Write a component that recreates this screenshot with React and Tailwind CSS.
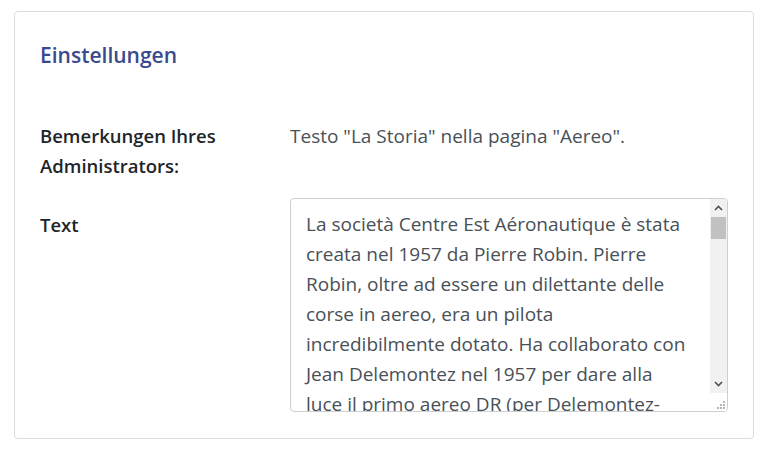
import React from "react";

const FONT = { fontFamily: '"Open Sans", "Noto Sans", sans-serif' };

const TEXT =
  "La società Centre Est Aéronautique è stata creata nel 1957 da Pierre Robin. Pierre Robin, oltre ad essere un dilettante delle corse in aereo, era un pilota incredibilmente dotato. Ha collaborato con Jean Delemontez nel 1957 per dare alla luce il primo aereo DR (per Delemontez-Robin), il DR100, un monomotore in legno.";

function Scrollbar() {
  return (
    <div className="flex w-[17px] shrink-0 flex-col">
      <div className="flex h-[18px] items-center justify-center bg-[#f1f1f1]">
        <svg width="9" height="6" viewBox="0 0 9 6">
          <path d="M1 5 L4.5 1.5 L8 5" fill="none" stroke="#505050" strokeWidth="1.6" />
        </svg>
      </div>
      <div className="flex flex-1 flex-col bg-[#f1f1f1]">
        <div className="mx-[1px] h-[22px] bg-[#c1c1c1]" />
      </div>
      <div className="flex h-[18px] items-center justify-center bg-[#f1f1f1]">
        <svg width="9" height="6" viewBox="0 0 9 6">
          <path d="M1 1 L4.5 4.5 L8 1" fill="none" stroke="#505050" strokeWidth="1.6" />
        </svg>
      </div>
      <div className="flex h-[18px] items-end justify-end bg-white pb-[2px] pr-[2px]">
        <svg width="10" height="10" viewBox="0 0 10 10">
          <rect x="8" y="2" width="2" height="2" fill="#b5b5b5" />
          <rect x="5" y="5" width="2" height="2" fill="#b5b5b5" />
          <rect x="8" y="5" width="2" height="2" fill="#b5b5b5" />
          <rect x="2" y="8" width="2" height="2" fill="#b5b5b5" />
          <rect x="5" y="8" width="2" height="2" fill="#b5b5b5" />
          <rect x="8" y="8" width="2" height="2" fill="#b5b5b5" />
        </svg>
      </div>
    </div>
  );
}

export default function App() {
  return (
    <div className="min-h-[452px] w-[766px] bg-white pl-[14px] pr-[12px] pt-[11px]" style={FONT}>
      <div className="h-[428px] rounded-[4px] border border-[#dcdcdc] bg-white px-[25px] pt-[28px]">
        <h2 className="text-[21px] leading-[30px] font-semibold text-[#3b4a8e]">Einstellungen</h2>
        <div className="mt-[51px] flex leading-[30px]">
          <div className="w-[250px] shrink-0 text-[18.5px] font-semibold text-[#212529]">
            Bemerkungen Ihres
            <br />
            Administrators:
          </div>
          <div className="text-[19px] text-[#495057]">Testo "La Storia" nella pagina "Aereo".</div>
        </div>
        <div className="mt-[17px] flex leading-[30px]">
          <div className="w-[250px] shrink-0 pt-[12px] text-[18.5px] font-semibold text-[#212529]">Text</div>
          <div className="flex h-[214px] flex-1 overflow-hidden rounded-[4px] border border-[#cfcfcf] bg-white">
            <div className="flex-1 overflow-hidden pl-[15px] pr-[20px] pt-[10px] text-[19px] text-[#495057]">{TEXT}</div>
            <Scrollbar />
          </div>
        </div>
      </div>
    </div>
  );
}
